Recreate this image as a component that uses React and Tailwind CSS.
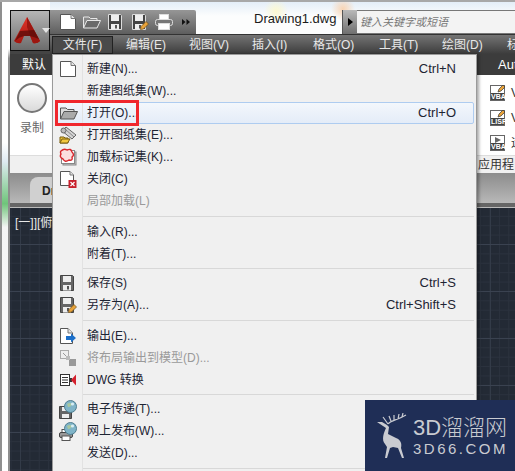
import React from 'react';

const cjk = "font-['Liberation_Sans','Noto_Sans_CJK_SC',sans-serif]";

function NewIcon() {
  return (
    <svg width="18" height="16" viewBox="0 0 18 16" className="shrink-0">
      <path d="M1.5 .5H12L16.5 4.5V15.5H1.5Z" fill="#fff" stroke="#555" />
      <path d="M12 .5V4.5H16.5" fill="#e4e4e4" stroke="#777" />
    </svg>
  );
}

function OpenIcon({ light }) {
  return (
    <svg width="18" height="14" viewBox="0 0 18 14" className="shrink-0">
      <path d="M.5 13V2H6L7.5 3.5H14V6" fill={light ? '#8a8a8a' : '#ddd'} stroke={light ? '#e8e8e8' : '#555'} />
      <path d="M.5 13L4 5.5H17.5L14 13Z" fill={light ? '#6a6a6a' : '#aaa'} stroke={light ? '#e8e8e8' : '#555'} />
    </svg>
  );
}

function SaveIcon({ pencil, light }) {
  return (
    <svg width="18" height="16" viewBox="0 0 18 16" className="shrink-0">
      <path d="M1.5 .5H13.5L14.5 1.5V15.5H1.5Z" fill={light ? '#444' : '#666'} stroke={light ? '#ddd' : '#444'} />
      <rect x="4" y="1" width="8" height="6" fill="#eee" />
      <rect x="4" y="10" width="8" height="5.5" fill="#eee" />
      <rect x="8" y="11" width="2" height="3.5" fill="#555" />
      {pencil && <path d="M9.5 15.5L10 12.5L15 7.5L17.5 10L12.5 15Z" fill="#e9a33a" stroke="#6b4a14" strokeWidth="0.7" />}
    </svg>
  );
}

function PrintIcon({ light }) {
  return (
    <svg width="18" height="16" viewBox="0 0 18 16" className="shrink-0">
      <rect x="4.5" y=".5" width="9" height="5" fill="#fff" stroke={light ? '#ddd' : '#555'} />
      <rect x=".5" y="5.5" width="17" height="6" rx="2" fill={light ? '#777' : '#999'} stroke={light ? '#ddd' : '#444'} />
      <rect x="3.5" y="9.5" width="11" height="6" fill="#fff" stroke={light ? '#ddd' : '#555'} />
    </svg>
  );
}

function SheetSetIcon() {
  return (
    <svg width="18" height="18" viewBox="0 0 18 18" className="shrink-0">
      <path d="M3 5L7 1L17 9L13 13Z" fill="#d4d4d4" stroke="#666" />
      <path d="M6 3L15 11" stroke="#888" />
      <circle cx="4.5" cy="4.5" r="2.5" fill="#bbb" stroke="#666" />
      <path d="M1 11H5L6 12H9V17H1Z" fill="#e9c23a" stroke="#7a5f10" />
      <path d="M1 17L3 13H11L8.5 17Z" fill="#f3c93f" stroke="#7a5f10" />
    </svg>
  );
}

function MarkupIcon() {
  return (
    <svg width="18" height="18" viewBox="0 0 18 18" className="shrink-0">
      <rect x="4" y="4" width="13" height="13" fill="#c8c8c8" stroke="#888" />
      <rect x="2.5" y="2.5" width="13" height="13" fill="#fff" stroke="#888" />
      <path d="M2 3Q5 0 8 2Q12 0 13 4Q16 7 13 9Q14 13 10 12Q6 15 4 11Q0 9 2 6Q1 4 2 3Z" fill="#fbdede" stroke="#d8262c" strokeWidth="1.4" />
    </svg>
  );
}

function CloseIcon() {
  return (
    <svg width="18" height="18" viewBox="0 0 18 18" className="shrink-0">
      <path d="M1.5 1.5H11L14.5 5V15.5H1.5Z" fill="#fff" stroke="#555" />
      <path d="M11 1.5V5H14.5" fill="#e4e4e4" stroke="#777" />
      <rect x="9.5" y="10" width="8" height="8" fill="#c8202c" />
      <path d="M11.5 12L15.5 16M15.5 12L11.5 16" stroke="#fff" strokeWidth="1.2" />
    </svg>
  );
}

function ExportIcon() {
  return (
    <svg width="18" height="18" viewBox="0 0 18 18" className="shrink-0">
      <path d="M1.5 1.5H9L13.5 6V16.5H1.5Z" fill="#fff" stroke="#555" />
      <path d="M9 1.5V6H13.5" fill="#e4e4e4" stroke="#777" />
      <path d="M7 9H12V6.5L17 11L12 15.5V13H7Z" fill="#1c6fc9" />
    </svg>
  );
}

function LayoutIcon() {
  return (
    <svg width="18" height="18" viewBox="0 0 18 18" className="shrink-0">
      <rect x="1.5" y="1.5" width="8" height="8" fill="#eee" stroke="#aaa" />
      <path d="M4 4L11 11" stroke="#999" />
      <rect x="10" y="10" width="7" height="7" fill="#999" />
      <rect x="7" y="7" width="4" height="4" fill="#bbb" />
    </svg>
  );
}

function DwgIcon() {
  return (
    <svg width="18" height="16" viewBox="0 0 18 16" className="shrink-0">
      <rect x="1.5" y="2.5" width="9" height="11" fill="#fff" stroke="#333" />
      <path d="M3 5.5H9M3 8H9M3 10.5H9" stroke="#333" />
      <rect x="11" y="6" width="2" height="4" fill="#333" />
      <path d="M17 2.5V13.5L12 8Z" fill="#d4202c" />
    </svg>
  );
}

function GlobeBadge() {
  return (
    <svg width="13" height="13" viewBox="0 0 13 13" className="absolute right-0 top-0">
      <circle cx="6.5" cy="6.5" r="6" fill="#7fb4c8" stroke="#4f7d8f" />
      <path d="M3 4Q6 2 8 4Q7 7 4 7Z" fill="#a8c8a0" />
      <circle cx="8.5" cy="4" r="1.6" fill="#d8edf3" />
    </svg>
  );
}

function TransmitIcon() {
  return (
    <div className="relative h-[19px] w-[18px]">
      <div className="absolute bottom-0 left-0">
        <svg width="13" height="13" viewBox="0 0 13 13">
          <path d="M.5.5H12.5V12.5H.5Z" fill="#666" stroke="#444" />
          <rect x="3" y="1" width="7" height="4" fill="#eee" />
          <rect x="3" y="8" width="7" height="4" fill="#eee" />
        </svg>
      </div>
      <GlobeBadge />
    </div>
  );
}

function PublishIcon() {
  return (
    <div className="relative h-[19px] w-[18px]">
      <div className="absolute bottom-0 left-0">
        <svg width="14" height="12" viewBox="0 0 14 12">
          <rect x="3" y=".5" width="8" height="3" fill="#fff" stroke="#555" />
          <rect x=".5" y="3.5" width="13" height="5" rx="1.5" fill="#999" stroke="#444" />
          <rect x="3" y="7" width="8" height="4.5" fill="#fff" stroke="#555" />
        </svg>
      </div>
      <GlobeBadge />
    </div>
  );
}

function MenuItem({ icon, label, shortcut, disabled, hover }) {
  return (
    <div
      className={`flex h-[22px] items-center ${
        hover
          ? 'mx-[2px] rounded-[2px] border border-[#aeccf0] bg-[linear-gradient(180deg,#f3f7fc,#e4ecf8)] pr-[17px]'
          : 'pr-[20px]'
      }`}
    >
      <div className={`flex shrink-0 items-center justify-center ${hover ? 'w-[26px]' : 'w-[29px]'}`}>{icon}</div>
      <span className={`ml-[5px] text-[12px] ${disabled ? 'text-[#9a9a9a]' : 'text-[#1d2433]'}`}>{label}</span>
      {shortcut && <span className="ml-auto text-[13px] text-[#1d2433]">{shortcut}</span>}
    </div>
  );
}

function Sep({ className }) {
  return <div className={`ml-[30px] mr-[2px] border-t border-[#d8d8d8] ${className}`} />;
}

function ScriptIcon({ tag, play }) {
  return (
    <div className="relative flex h-[16px] w-[15px] shrink-0 flex-col border border-[#666] bg-white">
      <div className="flex flex-1 items-center justify-center">
        {play && <div className="h-0 w-0 border-y-[3px] border-l-[6px] border-y-transparent border-l-[#666]" />}
      </div>
      <div className="h-[7px] bg-[#444] text-center text-[7px] leading-[7px] font-bold text-white">{tag}</div>
      {!play && (
        <svg width="9" height="9" viewBox="0 0 9 9" className="absolute -top-[2px] -right-[2px]">
          <path d="M1 8L2 5L6 1L8 3L4 7Z" fill="#e9a33a" stroke="#333" strokeWidth="0.7" />
        </svg>
      )}
    </div>
  );
}

function AcadLogo() {
  return (
    <svg width="26" height="28" viewBox="0 0 26 28" className="shrink-0">
      <defs>
        <linearGradient id="acadRed" x1="0" y1="0" x2="0" y2="1">
          <stop offset="0" stopColor="#e0352a" />
          <stop offset="1" stopColor="#a5160f" />
        </linearGradient>
      </defs>
      <path d="M13 0L0 24Q3 27 7 26L10 19H16L19 26Q23 27 26 24Z" fill="url(#acadRed)" />
      <path d="M13 0L26 24Q23 27 19 26L13 10Z" fill="#9c1610" />
      <path d="M6 14L20 13L25 22Q20 20 16 19H10Q5 20 1 24Z" fill="#5a0c08" opacity="0.75" />
    </svg>
  );
}

function Deer() {
  return (
    <svg width="32" height="46" viewBox="0 0 32 46" className="shrink-0">
      <path d="M9 45L11 34L9 31C5 27 8 19 10 15L1 9L6 9L11 12L13 14L12 21L20 25C25 27 26 31 25 35L28 45L26 45L22 35L17 34L14 35L11 45Z" fill="#c9cbd1" />
      <path d="M12 11C15 7 20 8 30 2M15 8L13 3M18 7L18 2M22 6L23 1M26 4L27 0M12 11L7 4" stroke="#c9cbd1" strokeWidth="1.2" fill="none" />
    </svg>
  );
}

export default function App() {
  return (
    <div className={`relative flex h-[471px] w-[515px] overflow-hidden border-t-2 border-[#a8a8a8] bg-white ${cjk}`}>
      {/* desktop peeking past the window frame */}
      <div className="h-full w-[2px] shrink-0 bg-[#8f8f8f]" />
      <div className="h-full w-[6px] shrink-0 bg-[linear-gradient(180deg,#ffffff_0%,#ffffff_30%,#dfeaf2_34%,#6fc47a_43%,#f4f4f4_48%,#ffffff_100%)]" />
      <div className="h-full w-[2px] shrink-0 bg-[linear-gradient(180deg,#ffffff_10%,#8d8d8d_12%)]" />

      <div className="flex min-w-0 flex-1 flex-col">
        {/* title + menu */}
        <div className="flex h-[52px] shrink-0">
          <div className="flex w-[40px] shrink-0 flex-col">
            <div className="h-[8px] shrink-0" />
            <div className="flex h-[41px] shrink-0 items-center border border-[#111] bg-[linear-gradient(180deg,#b5b5b5,#6c6c6c)] pl-[3px]">
              <AcadLogo />
              <div className="ml-[2px] h-0 w-0 shrink-0 border-x-[4px] border-t-[5px] border-x-transparent border-t-[#e4e4e4]" />
            </div>
            <div className="flex-1 bg-[#444]" />
          </div>
          <div className="flex min-w-0 flex-1 flex-col">
            <div className="flex h-[32px] shrink-0 items-start bg-[#fcfdfd] bg-[radial-gradient(circle_at_293px_7px,#f8d4b4_0,transparent_12px),radial-gradient(circle_at_226px_9px,#fbf8d0_0,transparent_12px),linear-gradient(180deg,#e4eef8_0,#fcfdfd_14px)] pt-[8px]">
              <div className="flex h-[24px] w-[146px] shrink-0 items-center gap-[6px] rounded-tr-[2px] bg-[linear-gradient(180deg,#969696,#5e5e5e)] pl-[9px]">
                <NewIcon />
                <OpenIcon light />
                <SaveIcon light />
                <SaveIcon light pencil />
                <PrintIcon light />
                <svg width="8" height="6" viewBox="0 0 8 6" className="ml-[3px] shrink-0">
                  <path d="M0 0L3.5 3L0 6ZM4.5 0L8 3L4.5 6Z" fill="#111" />
                </svg>
              </div>
              <span className="ml-[58px] w-[88px] shrink-0 pt-[1px] text-[13px] leading-[16px] text-[#1b1b1b]">Drawing1.dwg</span>
              <div className="flex h-[24px] w-[15px] shrink-0 items-center justify-center border-l border-[#555] bg-[linear-gradient(180deg,#b9b9b9,#6f6f6f)]">
                <div className="h-0 w-0 border-y-[4px] border-l-[5px] border-y-transparent border-l-black" />
              </div>
              <div className="flex h-[24px] flex-1 items-center border-y border-[#777] bg-[#f3f3f3] pl-[3px] text-[11px] text-[#777] italic">
                键入关键字或短语
              </div>
            </div>
            <div className="flex h-[20px] shrink-0 items-center border-t border-[#333] bg-[linear-gradient(180deg,#747474,#3c3c3c)] pl-[2px] text-[12px] text-[#e8e8e8]">
              <span className="flex h-[18px] w-[61px] shrink-0 items-center justify-center border border-[#222] bg-[#4a4a4a]">文件(F)</span>
              <span className="ml-[13px] w-[53px] shrink-0">编辑(E)</span>
              <span className="ml-[10px] w-[53px] shrink-0">视图(V)</span>
              <span className="ml-[10px] w-[53px] shrink-0">插入(I)</span>
              <span className="ml-[8px] w-[55px] shrink-0">格式(O)</span>
              <span className="ml-[11px] w-[52px] shrink-0">工具(T)</span>
              <span className="ml-[11px] w-[54px] shrink-0">绘图(D)</span>
              <span className="ml-[11px] shrink-0 whitespace-nowrap">标注</span>
            </div>
          </div>
        </div>

        {/* ribbon tabs */}
        <div className="flex h-[21px] shrink-0 items-center bg-[#3c3c3c] text-[12px] text-white">
          <span className="ml-[12px] w-[24px] shrink-0 whitespace-nowrap">默认</span>
          <span className="ml-[452px] shrink-0 text-[13px] whitespace-nowrap">Aut</span>
        </div>

        {/* ribbon body */}
        <div className="flex h-[80px] shrink-0 bg-white">
          <div className="flex w-[42px] shrink-0 flex-col items-center pl-[2px] pt-[8px]">
            <div className="h-[30px] w-[30px] rounded-full border-2 border-[#777] bg-[linear-gradient(180deg,#ffffff,#dadada)]" />
            <span className="mt-[6px] text-[12px] text-[#666]">录制</span>
          </div>
          <div className="ml-[438px] flex flex-col gap-[7px] pt-[9px] text-[12px] text-[#333]">
            <div className="flex items-center gap-[6px]"><ScriptIcon tag="VBA" /><span>V</span></div>
            <div className="flex items-center gap-[6px]"><ScriptIcon tag="LISP" /><span>V</span></div>
            <div className="flex items-center gap-[6px]"><ScriptIcon tag="VBA" play /><span>运</span></div>
          </div>
        </div>
        <div className="flex h-[18px] shrink-0 border-t border-[#ddd] bg-[#f0f0f0] text-[12px] text-[#333]">
          <span className="ml-[468px] whitespace-nowrap">应用程</span>
        </div>

        {/* file tab strip */}
        <div className="flex h-[34px] shrink-0 items-end border-b-[4px] border-[#666] bg-[linear-gradient(180deg,#8c8c8c,#b8b8b8)] pl-[20px]">
          <div className="h-[26px] w-[40px] shrink-0 rounded-tl-[8px] bg-[#d0d0d0] pl-[12px] pt-[5px] text-[12px] font-bold text-[#222]">Dr</div>
        </div>

        {/* drawing area */}
        <div className="min-h-0 flex-1 border-t border-[#bbb] bg-[#232a35] bg-[linear-gradient(#3a4250_1px,transparent_1px),linear-gradient(90deg,#333b48_1px,transparent_1px),linear-gradient(#2b323e_1px,transparent_1px),linear-gradient(90deg,#2b323e_1px,transparent_1px)] bg-[size:47px_47px,47px_47px,9.4px_9.4px,9.4px_9.4px] bg-[position:0_36px,10px_0,0_36px,10px_0] pl-[5px] pt-[6px] text-[12px] text-[#e8e8e8]">
          [一]][俯视]
        </div>
      </div>

      {/* open File menu */}
      <div className="absolute left-[52px] top-[52px] flex h-[420px] w-[425px] flex-col border-x border-t border-[#9a9a9a] bg-[#f0f0f0] pt-[3px] shadow-[2px_0_3px_rgba(0,0,0,0.35)]">
        <div className="absolute bottom-0 left-[29px] top-0 w-px bg-[#e2e2e2]" />
        <MenuItem icon={<NewIcon />} label="新建(N)..." shortcut="Ctrl+N" />
        <MenuItem label="新建图纸集(W)..." />
        <MenuItem icon={<OpenIcon />} label="打开(O)..." shortcut="Ctrl+O" hover />
        <MenuItem icon={<SheetSetIcon />} label="打开图纸集(E)..." />
        <MenuItem icon={<MarkupIcon />} label="加载标记集(K)..." />
        <MenuItem icon={<CloseIcon />} label="关闭(C)" />
        <MenuItem label="局部加载(L)" disabled />
        <Sep className="my-[4px]" />
        <MenuItem label="输入(R)..." />
        <MenuItem label="附着(T)..." />
        <Sep className="my-[3px]" />
        <MenuItem icon={<SaveIcon />} label="保存(S)" shortcut="Ctrl+S" />
        <MenuItem icon={<SaveIcon pencil />} label="另存为(A)..." shortcut="Ctrl+Shift+S" />
        <Sep className="my-[4px]" />
        <MenuItem icon={<ExportIcon />} label="输出(E)..." />
        <MenuItem icon={<LayoutIcon />} label="将布局输出到模型(D)..." disabled />
        <MenuItem icon={<DwgIcon />} label="DWG 转换" />
        <Sep className="my-[3px]" />
        <MenuItem icon={<TransmitIcon />} label="电子传递(T)..." />
        <MenuItem icon={<PublishIcon />} label="网上发布(W)..." />
        <MenuItem label="发送(D)..." />
        <Sep className="my-[4px]" />
      </div>

      {/* red annotation around 打开 */}
      <div className="absolute left-[55px] top-[98px] h-[26px] w-[84px] border-[3px] border-[#f0272d]" />

      {/* watermark */}
      <div className="absolute bottom-0 right-0 flex h-[71px] w-[150px] items-center gap-[5px] bg-[#1f2e56] pl-[11px]">
        <Deer />
        <div className="flex flex-col">
          <span className="text-[22px] leading-[26px] font-light whitespace-nowrap text-[#c9cbd1]">3D溜溜网</span>
          <span className="text-[15px] leading-[16px] tracking-[2.5px] whitespace-nowrap text-[#c9cbd1]">3D66.COM</span>
        </div>
      </div>
    </div>
  );
}
